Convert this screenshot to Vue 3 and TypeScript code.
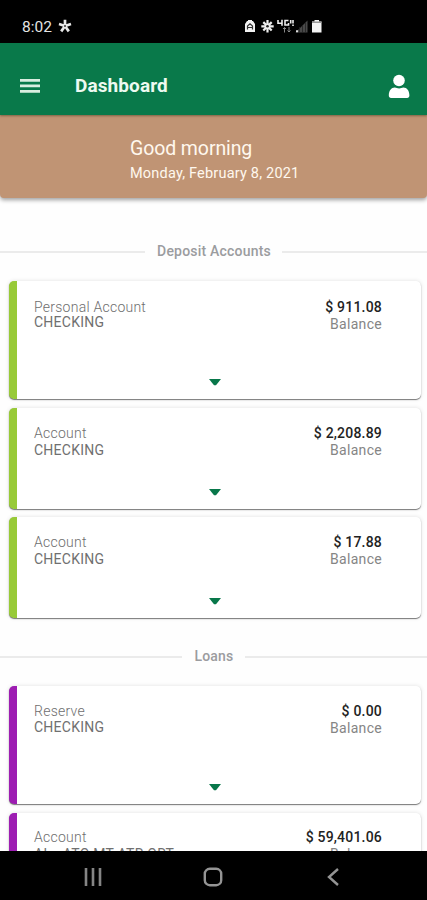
<script setup lang="ts">
interface Account {
  name: string
  type: string
  balance: string
  tall?: boolean
}

interface Section {
  title: string
  kind: 'deposit' | 'loan'
  accounts: Account[]
}

const sections: Section[] = [
  {
    title: 'Deposit Accounts',
    kind: 'deposit',
    accounts: [
      { name: 'Personal Account', type: 'CHECKING', balance: '$ 911.08', tall: true },
      { name: 'Account', type: 'CHECKING', balance: '$ 2,208.89' },
      { name: 'Account', type: 'CHECKING', balance: '$ 17.88' },
    ],
  },
  {
    title: 'Loans',
    kind: 'loan',
    accounts: [
      { name: 'Reserve', type: 'CHECKING', balance: '$ 0.00', tall: true },
      { name: 'Account', type: 'AL - ATO MT ATR ORT', balance: '$ 59,401.06' },
    ],
  },
]
</script>

<template>
  <div class="phone">
    <div class="status">
      <span class="time">8:02</span>
      <svg class="star" width="14" height="14" viewBox="0 0 14 14" stroke="#e8e8e8" stroke-width="2.7" fill="none">
        <path d="M7 7V.8M7 7L1 5M7 7l6-2M7 7l-3.8 5.4M7 7l3.8 5.4" />
        <circle cx="7" cy="7" r="1" fill="#333" stroke="none" />
      </svg>
      <svg class="indicators" width="80" height="16" viewBox="0 0 80 16">
        <path d="M1 5l2-3h1V1h4v1h1l2 3v8H1z" fill="#f2f2f2" />
        <path d="M3.5 10.500V7L6 4.800 8.500 7v3.500M4 8.500h4" stroke="#333" stroke-width="1.200" fill="none" />
        <g stroke="#eee" stroke-width="2.200" fill="none">
          <path d="M23.500 1v12.500M17.300 7.300h12.400M19.300 3.100l8.400 8.400M27.700 3.100l-8.400 8.400" />
        </g>
        <circle cx="23.500" cy="7.300" r="1.300" fill="#222" />
        <path d="M34 1v3.300h4M38 .8v6M44.500 1.500H41V6h3.500V4M49 1v3.500M49 5.500V7M46.700 1v3.500" stroke="#eee" stroke-width="1.600" fill="none" />
        <path d="M40.500 13.500V8.500M39 10l1.500-1.500L42 10M45 8v5M43.500 11.500L45 13l1.500-1.500" stroke="#888" stroke-width="1" fill="none" />
        <path d="M51.500 13.500L63.500 1.500v12z" fill="#484848" />
        <path d="M52 12.300h2" stroke="#ddd" stroke-width="2" />
        <path d="M55.500 8v6M58.500 6v8M61.500 3v11" stroke="#222" stroke-width=".8" />
        <path d="M68 2.500h2.500V1h4.500v1.500h2.500v11H68z" fill="#f4f4f4" />
        <path d="M68 2.500h9.500V4H68z" fill="#999" />
      </svg>
    </div>

    <header class="appbar">
      <svg class="menu" width="20" height="14" viewBox="0 0 20 14" fill="#d9eee0">
        <path d="M0 0h20v2.700H0zM0 5.500h20v2.700H0zM0 11h20v2.700H0z" />
      </svg>
      <h1>Dashboard</h1>
      <svg class="user" width="22" height="25" viewBox="0 0 22 25" fill="#fff">
        <circle cx="11" cy="6.500" r="5.800" />
        <path d="M.8 21.500c0-5 2.500-8 6-8 1.500 0 2.500.9 4.300.9s2.800-.9 4.300-.9c3.500 0 6 3 6 8 0 1.600-.9 2.500-2.300 2.500h-16c-1.400 0-2.300-.9-2.300-2.500z" />
      </svg>
    </header>

    <section class="banner">
      <div class="greeting">Good morning</div>
      <div class="date">Monday, February 8, 2021</div>
    </section>

    <main class="content">
      <section v-for="section in sections" :key="section.title" :class="['group', section.kind]">
        <h2><span>{{ section.title }}</span></h2>
        <article
          v-for="(account, i) in section.accounts"
          :key="i"
          :class="['card', { tall: account.tall }]"
        >
          <div class="info">
            <div class="left">
              <div class="name">{{ account.name }}</div>
              <div class="type">{{ account.type }}</div>
            </div>
            <div class="right">
              <div class="amount">{{ account.balance }}</div>
              <div class="label">Balance</div>
            </div>
          </div>
          <svg class="caret" width="12" height="7" viewBox="0 0 12 7"><path d="M0 0h12L7 6.300H5z" fill="#08774a" /></svg>
        </article>
      </section>
    </main>

    <nav class="navbar">
      <svg width="18" height="18" viewBox="0 0 18 18" stroke="#858585" stroke-width="2.600"><path d="M2 0v18M9 0v18M16 0v18" /></svg>
      <svg class="home" width="20" height="20" viewBox="0 0 20 20" fill="none" stroke="#949494" stroke-width="2.400"><rect x="1.800" y="1.800" width="16.400" height="16.400" rx="5" /></svg>
      <svg width="12" height="18" viewBox="0 0 12 18" fill="none" stroke="#949494" stroke-width="2.400"><path d="M11 1L2 9l9 8" /></svg>
    </nav>
  </div>
</template>

<style>
body {
  background: #fff;
}
</style>

<style scoped>
.phone {
  width: 427px;
  height: 900px;
  display: flex;
  flex-direction: column;
  overflow: hidden;
  background: #fefefe;
  font-family: Roboto, "Liberation Sans", sans-serif;
}
.status {
  flex: none;
  height: 43px;
  box-sizing: border-box;
  display: flex;
  align-items: flex-start;
  padding: 19px 0 0 22px;
  background: #000;
  color: #e4e4e4;
}
.time {
  width: 36px;
  font-size: 15.500px;
  line-height: 16px;
}
.star {
  flex: none;
  display: block;
}
.indicators {
  display: block;
  margin-left: 172px;
}
.appbar {
  position: relative;
  z-index: 2;
  flex: none;
  height: 72px;
  box-sizing: border-box;
  display: flex;
  align-items: center;
  padding: 14px 17px 0 20px;
  background: #09794a;
  box-shadow: 0 1px 2px rgba(60, 50, 20, 0.5);
}
.appbar h1 {
  flex: 1;
  margin: 0 0 0 35px;
  font-size: 19px;
  line-height: 24px;
  font-weight: 700;
  letter-spacing: 0.1px;
  color: #eefaf1;
}
.banner {
  flex: none;
  height: 83px;
  box-sizing: border-box;
  padding: 22px 0 0 130px;
  background: #c09474;
  border-radius: 0 0 4px 4px;
  box-shadow: 0 2px 4px rgba(0, 0, 0, 0.38);
  color: #fff8ee;
}
.greeting {
  font-size: 19.500px;
  line-height: 24px;
  letter-spacing: -0.1px;
}
.date {
  margin-top: 4px;
  font-size: 14.500px;
  line-height: 18px;
  letter-spacing: 0.2px;
}
.content {
  flex: 1;
  min-height: 0;
  overflow: hidden;
  padding-top: 43px;
}
.group h2 {
  display: flex;
  align-items: center;
  margin: 0 0 20px;
  height: 20px;
  font-size: 14px;
  font-weight: 500;
  line-height: 20px;
  letter-spacing: 0.2px;
  color: #9b9c9f;
}
.group h2::before,
.group h2::after {
  content: "";
  flex: 1;
  height: 2px;
  margin-top: 1px;
  background: #ebebeb;
}
.group h2 span {
  padding: 0 11px 0 12px;
}
.group.loan {
  margin-top: 28px;
}
.card {
  display: flex;
  flex-direction: column;
  justify-content: space-between;
  align-items: center;
  height: 101px;
  box-sizing: border-box;
  margin: 0 6px 8.500px 9px;
  padding: 17px 39px 13px 17px;
  border-left: 8px solid #98ca38;
  border-radius: 5px;
  background: #fff;
  box-shadow: 0 1px 1px rgba(0, 0, 0, 0.5), 0 0 4px rgba(0, 0, 0, 0.12);
}
.card.tall {
  height: 118px;
  padding-top: 18px;
}
.loan .card {
  border-left-color: #9d1db2;
  padding-top: 16px;
}
.loan .card.tall {
  padding-top: 17px;
}
.info {
  align-self: stretch;
  display: flex;
  justify-content: space-between;
  font-size: 14px;
  line-height: 17px;
}
.left {
  white-space: nowrap;
}
.name {
  color: #6e6e6e;
  font-weight: 300;
  letter-spacing: 0.25px;
}
.type {
  color: #707070;
  letter-spacing: 0.25px;
}
.tall .type {
  margin-top: -2px;
}
.loan .tall .type,
.loan .card.tall .type {
  margin-top: -1px;
}
.right {
  text-align: right;
}
.amount {
  color: #222;
  font-weight: 500;
  letter-spacing: 0.2px;
}
.label {
  color: #858585;
  letter-spacing: 0.3px;
}
.caret {
  display: block;
  margin-right: -13px;
}
.navbar {
  flex: none;
  height: 49px;
  box-sizing: border-box;
  display: flex;
  align-items: center;
  justify-content: space-between;
  padding: 2px 88px 0 84px;
  background: #000;
}
.home {
  margin-right: 3px;
}
</style>
